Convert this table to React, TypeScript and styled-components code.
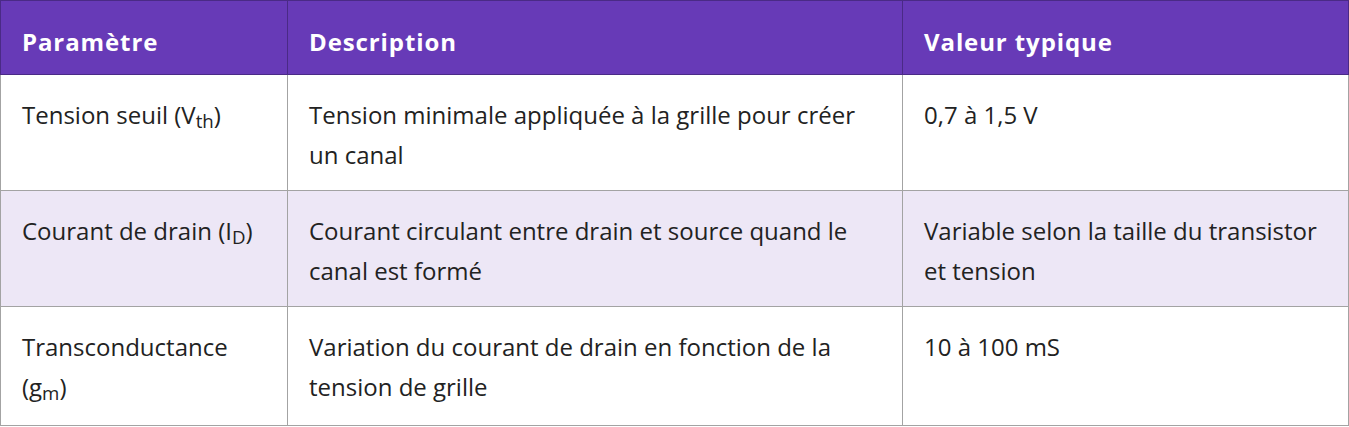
import React from 'react';
import styled, { createGlobalStyle } from 'styled-components';

const GlobalStyle = createGlobalStyle`
  html, body {
    margin: 0;
    padding: 0;
    background: #ffffff;
  }
  body {
    font-family: "Open Sans", "Noto Sans", "DejaVu Sans", sans-serif;
  }
`;

const Table = styled.table`
  width: 1348px;
  border-collapse: collapse;
  table-layout: fixed;
  font-size: 24px;
  line-height: 40px;
  color: #222222;
`;

const Col = styled.col<{ $width: number }>`
  width: ${props => props.$width}px;
`;

const HeadCell = styled.th`
  box-sizing: border-box;
  background-color: #673ab7;
  color: #ffffff;
  font-weight: 700;
  letter-spacing: 0.9px;
  text-align: left;
  padding: 21px 21px 12px;
  border: 1px solid #4a2a86;
`;

const Row = styled.tr<{ $shaded?: boolean }>`
  background-color: ${props => (props.$shaded ? '#ede7f6' : '#ffffff')};
`;

const Cell = styled.td`
  box-sizing: border-box;
  vertical-align: top;
  padding: 20px 21px 15px;
  border: 1px solid #a3a3a3;
`;

const Sub = styled.sub`
  font-size: 0.78em;
  line-height: 34px;
  vertical-align: -0.22em;
`;

interface Param {
  name: React.ReactNode;
  description: string;
  value: string;
}

const params: Param[] = [
  {
    name: <>Tension seuil (V<Sub>th</Sub>)</>,
    description: 'Tension minimale appliquée à la grille pour créer un canal',
    value: '0,7 à 1,5 V',
  },
  {
    name: <>Courant de drain (I<Sub>D</Sub>)</>,
    description: 'Courant circulant entre drain et source quand le canal est formé',
    value: 'Variable selon la taille du transistor et tension',
  },
  {
    name: <>Transconductance (g<Sub>m</Sub>)</>,
    description: 'Variation du courant de drain en fonction de la tension de grille',
    value: '10 à 100 mS',
  },
];

const App: React.FC = () => {
  return (
    <>
      <GlobalStyle />
      <Table>
        <colgroup>
          <Col $width={287} />
          <Col $width={615} />
          <Col $width={446} />
        </colgroup>
        <thead>
          <tr>
            <HeadCell>Paramètre</HeadCell>
            <HeadCell>Description</HeadCell>
            <HeadCell>Valeur typique</HeadCell>
          </tr>
        </thead>
        <tbody>
          {params.map((p, i) => (
            <Row key={i} $shaded={i % 2 === 1}>
              <Cell>{p.name}</Cell>
              <Cell>{p.description}</Cell>
              <Cell>{p.value}</Cell>
            </Row>
          ))}
        </tbody>
      </Table>
    </>
  );
};

export default App;
